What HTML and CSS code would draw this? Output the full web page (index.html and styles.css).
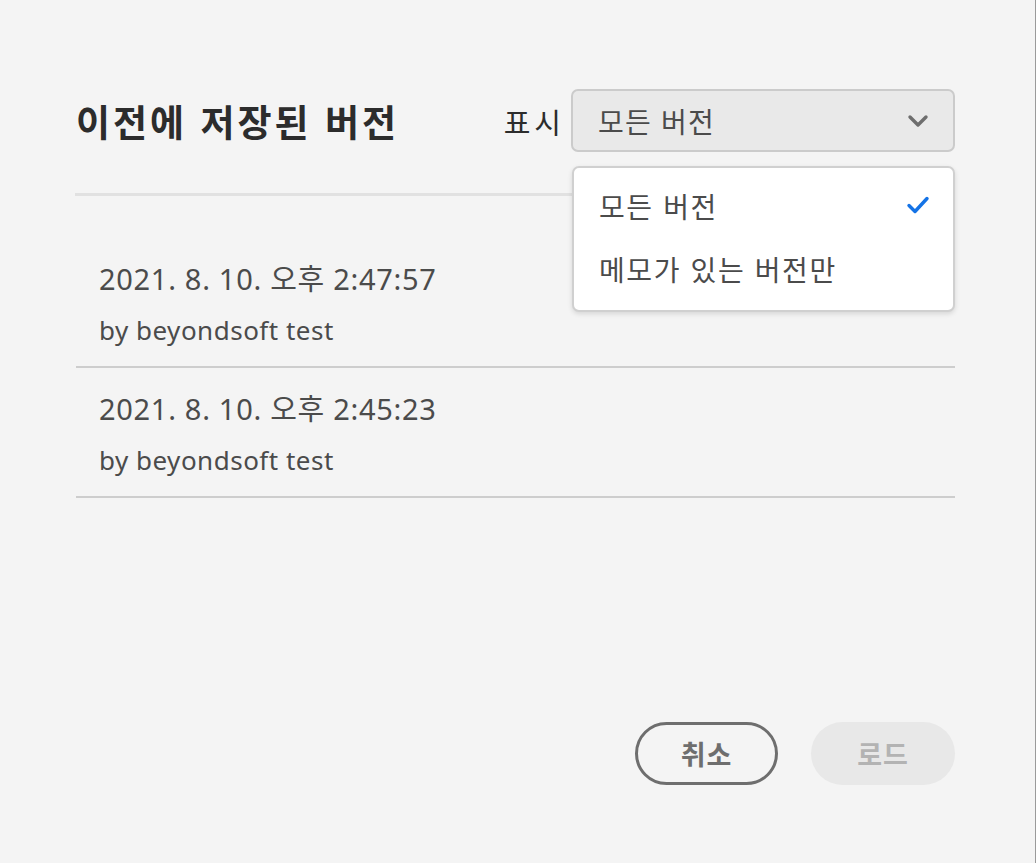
FILE: index.html
```html
<!DOCTYPE html>
<html lang="ko">
<head>
<meta charset="utf-8">
<link rel="stylesheet" href="styles.css">
</head>
<body>
<div class="dialog">
  <div class="header">
    <h1 class="title">이전에 저장된 버전</h1>
    <span class="show-label">표시</span>
    <div class="picker-wrap">
      <div class="picker">
        <span class="picker-value">모든 버전</span>
        <svg class="chevron" width="22" height="14" viewBox="0 0 22 14"><path d="M3 3 L11 11 L19 3" fill="none" stroke="#6e6e6e" stroke-width="3.4" stroke-linecap="round" stroke-linejoin="round"/></svg>
      </div>
      <ul class="menu">
        <li class="menu-item selected"><span>모든 버전</span>
          <svg class="check" width="24" height="20" viewBox="0 0 24 20"><path d="M3 10.5 L9 16.5 L21 3.5" fill="none" stroke="#1473e6" stroke-width="3.4" stroke-linecap="round" stroke-linejoin="round"/></svg>
        </li>
        <li class="menu-item"><span>메모가 있는 버전만</span></li>
      </ul>
    </div>
  </div>
  <div class="rule"></div>
  <ul class="versions">
    <li class="version">
      <div class="version-date">2021. 8. 10. 오후 2:47:57</div>
      <div class="version-author">by beyondsoft test</div>
    </li>
    <li class="version">
      <div class="version-date">2021. 8. 10. 오후 2:45:23</div>
      <div class="version-author">by beyondsoft test</div>
    </li>
  </ul>
  <div class="footer">
    <button class="btn btn-cancel">취소</button>
    <button class="btn btn-load" disabled>로드</button>
  </div>
</div>
</body>
</html>
```

FILE: styles.css
```css
html, body {
  margin: 0;
  padding: 0;
  background: #f4f4f4;
}
body {
  font-family: "Noto Sans", "Noto Sans CJK KR", sans-serif;
  color: #4b4b4b;
}
.dialog {
  box-sizing: border-box;
  height: 863px;
  width: 1036px;
  border-right: 1px solid #9a9a9a;
  padding: 89px 80px 78px 76px;
  display: flex;
  flex-direction: column;
}
.header {
  display: flex;
  align-items: center;
  height: 63px;
}
.title {
  flex: 1;
  margin: 0 0 0 0;
  font-family: "Noto Sans CJK KR", sans-serif;
  font-size: 37px;
  font-weight: 700;
  letter-spacing: 3px;
  color: #2c2c2c;
}
.show-label {
  font-family: "Noto Sans CJK KR", sans-serif;
  font-size: 29px;
  color: #2c2c2c;
  letter-spacing: 4px;
  margin-right: 6px;
}
.picker-wrap {
  position: relative;
  width: 384px;
}
.picker {
  box-sizing: border-box;
  height: 63px;
  border: 2px solid #cbcbcb;
  border-radius: 7px;
  background: #e9e9e9;
  display: flex;
  align-items: center;
  padding: 0 24px 0 25px;
}
.picker-value {
  flex: 1;
  font-family: "Noto Sans CJK KR", sans-serif;
  font-size: 28px;
  letter-spacing: 1.2px;
  color: #4b4b4b;
}
.menu {
  position: absolute;
  top: 77px;
  left: 1px;
  right: 0;
  margin: 0;
  padding: 6px 0 12px;
  list-style: none;
  background: #fff;
  border: 2px solid #d0d0d0;
  border-radius: 7px;
  box-shadow: 0 2px 5px rgba(0, 0, 0, 0.12);
  box-sizing: border-box;
  height: 146px;
}
.menu-item {
  height: 63px;
  display: flex;
  align-items: center;
  padding: 0 23px 0 25px;
  font-family: "Noto Sans CJK KR", sans-serif;
  font-size: 28px;
  letter-spacing: 1.6px;
  color: #4b4b4b;
}
.menu-item span {
  flex: 1;
}
.check {
  margin-top: -2px;
}
.rule {
  height: 3px;
  background: #e1e1e1;
  margin: 41px 0 0 -1px;
}
.versions {
  list-style: none;
  margin: 42px 0 0;
  padding: 0;
}
.version {
  box-sizing: border-box;
  height: 130px;
  border-bottom: 2px solid #cdcdcd;
  padding: 21px 0 0 23px;
}
.version-date {
  font-size: 29px;
  letter-spacing: 0.7px;
  line-height: 40px;
  color: #4b4b4b;
}
.version-author {
  font-size: 26px;
  letter-spacing: 0.5px;
  line-height: 34px;
  margin-top: 14px;
  color: #4b4b4b;
}
.footer {
  margin-top: auto;
  display: flex;
  justify-content: flex-end;
  gap: 33px;
}
.btn {
  box-sizing: border-box;
  height: 63px;
  width: 143px;
  border-radius: 32px;
  font-family: "Noto Sans CJK KR", sans-serif;
  font-size: 27px;
  font-weight: 700;
  letter-spacing: 1px;
  padding: 0;
}
.btn-cancel {
  border: 3px solid #6e6e6e;
  background: transparent;
  color: #6e6e6e;
}
.btn-load {
  width: 144px;
  border: none;
  background: #e8e8e8;
  color: #b3b3b3;
}
```
